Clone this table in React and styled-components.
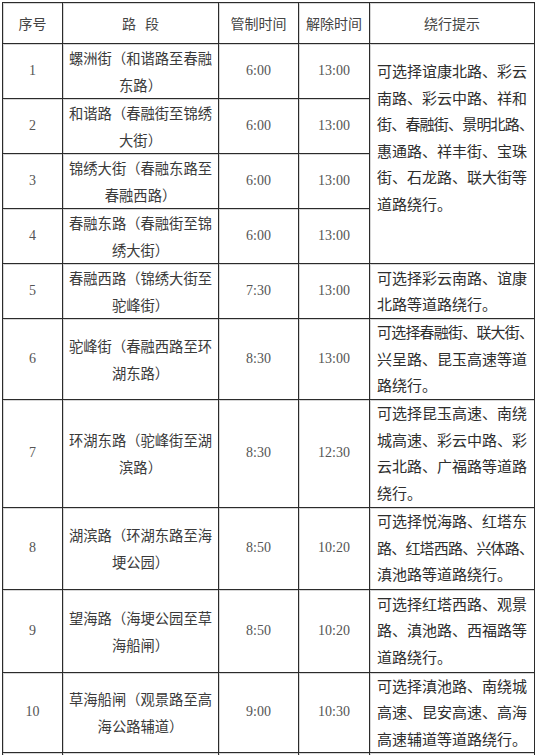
import React from "react";
import styled, { createGlobalStyle } from "styled-components";

const GlobalStyle = createGlobalStyle`
  html, body {
    margin: 0;
    padding: 0;
    background: #fff;
    overflow: hidden;
  }
`;

const cjk = `"Noto Sans CJK SC", "Noto Sans", sans-serif`;
const serif = `"Liberation Serif", "DejaVu Serif", serif`;

const Page = styled.div`
  width: 536px;
  height: 755px;
  overflow: hidden;
  padding: 2px 0 0 2px;
  box-sizing: border-box;
`;

const Table = styled.table`
  border-collapse: collapse;
  table-layout: fixed;
  width: 532px;
  color: #333;
  td,
  th {
    border: 1px solid #2b2b2b;
    padding: 0;
    box-shadow: inset 1px 1px 0 #d6d6d6;
  }
`;

const HeadCell = styled.th`
  font-family: ${cjk};
  font-weight: 400;
  font-size: 14px;
  color: #444;
  text-align: center;
  vertical-align: middle;
`;

const Gap = styled.span`
  display: inline-block;
  width: 9px;
`;

const NumCell = styled.td`
  font-family: ${serif};
  font-size: 14px;
  color: #555;
  text-align: center;
  vertical-align: middle;
`;

const PathCell = styled.td`
  font-family: ${cjk};
  font-size: 14.3px;
  line-height: 27px;
  text-align: center;
  vertical-align: middle;
  white-space: nowrap;
  color: #3a3a3a;
`;

const HintCell = styled.td`
  font-family: ${cjk};
  font-size: 15px;
  line-height: 26.5px;
  text-align: left;
  vertical-align: ${(p) => (p.$top ? "top" : "middle")};
  padding: ${(p) => (p.$top ? "14px 0 0 7px" : "0 0 0 7px")} !important;
  white-space: nowrap;
  overflow: hidden;
  color: #2e2e2e;
`;

// lines of 11 characters hang their final "、" at the border; squeeze them a little
const Tight = styled.span`
  letter-spacing: -0.8px;
`;

const Row = styled.tr`
  height: ${(p) => p.$h}px;
`;

const lines = (arr) =>
  arr.map((l, i) => (
    <React.Fragment key={i}>
      {i > 0 && <br />}
      {l.length > 10 ? <Tight>{l}</Tight> : l}
    </React.Fragment>
  ));

const rows = [
  { n: "1", path: ["螺洲街（和谐路至春融", "东路）"], s: "6:00", e: "13:00", h: 54 },
  { n: "2", path: ["和谐路（春融街至锦绣", "大街）"], s: "6:00", e: "13:00", h: 55 },
  { n: "3", path: ["锦绣大街（春融东路至", "春融西路）"], s: "6:00", e: "13:00", h: 55 },
  { n: "4", path: ["春融东路（春融街至锦", "绣大街）"], s: "6:00", e: "13:00", h: 55 },
  {
    n: "5",
    path: ["春融西路（锦绣大街至", "驼峰街）"],
    s: "7:30",
    e: "13:00",
    h: 55,
    hint: ["可选择彩云南路、谊康", "北路等道路绕行。"],
  },
  {
    n: "6",
    path: ["驼峰街（春融西路至环", "湖东路）"],
    s: "8:30",
    e: "13:00",
    h: 80,
    hint: ["可选择春融街、联大街、", "兴呈路、昆玉高速等道", "路绕行。"],
  },
  {
    n: "7",
    path: ["环湖东路（驼峰街至湖", "滨路）"],
    s: "8:30",
    e: "12:30",
    h: 108,
    hint: ["可选择昆玉高速、南绕", "城高速、彩云中路、彩", "云北路、广福路等道路", "绕行。"],
  },
  {
    n: "8",
    path: ["湖滨路（环湖东路至海", "埂公园）"],
    s: "8:50",
    e: "10:20",
    h: 82,
    hint: ["可选择悦海路、红塔东", "路、红塔西路、兴体路、", "滇池路等道路绕行。"],
  },
  {
    n: "9",
    path: ["望海路（海埂公园至草", "海船闸）"],
    s: "8:50",
    e: "10:20",
    h: 83,
    hint: ["可选择红塔西路、观景", "路、滇池路、西福路等", "道路绕行。"],
  },
  {
    n: "10",
    path: ["草海船闸（观景路至高", "海公路辅道）"],
    s: "9:00",
    e: "10:30",
    h: 80,
    hint: ["可选择滇池路、南绕城", "高速、昆安高速、高海", "高速辅道等道路绕行。"],
  },
];

const firstHint = [
  "可选择谊康北路、彩云",
  "南路、彩云中路、祥和",
  "街、春融街、景明北路、",
  "惠通路、祥丰街、宝珠",
  "街、石龙路、联大街等",
  "道路绕行。",
];

export default function App() {
  return (
    <Page>
      <GlobalStyle />
      <Table>
        <colgroup>
          <col style={{ width: 60 }} />
          <col style={{ width: 156 }} />
          <col style={{ width: 80 }} />
          <col style={{ width: 71 }} />
          <col style={{ width: 165 }} />
        </colgroup>
        <tbody>
          <Row $h={41}>
            <HeadCell>序号</HeadCell>
            <HeadCell>
              路<Gap />段
            </HeadCell>
            <HeadCell>管制时间</HeadCell>
            <HeadCell>解除时间</HeadCell>
            <HeadCell>绕行提示</HeadCell>
          </Row>
          {rows.map((r, i) => (
            <Row key={r.n} $h={r.h}>
              <NumCell>{r.n}</NumCell>
              <PathCell>{lines(r.path)}</PathCell>
              <NumCell>{r.s}</NumCell>
              <NumCell>{r.e}</NumCell>
              {i === 0 && (
                <HintCell rowSpan={4} $top>
                  {lines(firstHint)}
                </HintCell>
              )}
              {r.hint && <HintCell>{lines(r.hint)}</HintCell>}
            </Row>
          ))}
          <Row $h={60}>
            <NumCell />
            <PathCell />
            <NumCell />
            <NumCell />
            <HintCell />
          </Row>
        </tbody>
      </Table>
    </Page>
  );
}
